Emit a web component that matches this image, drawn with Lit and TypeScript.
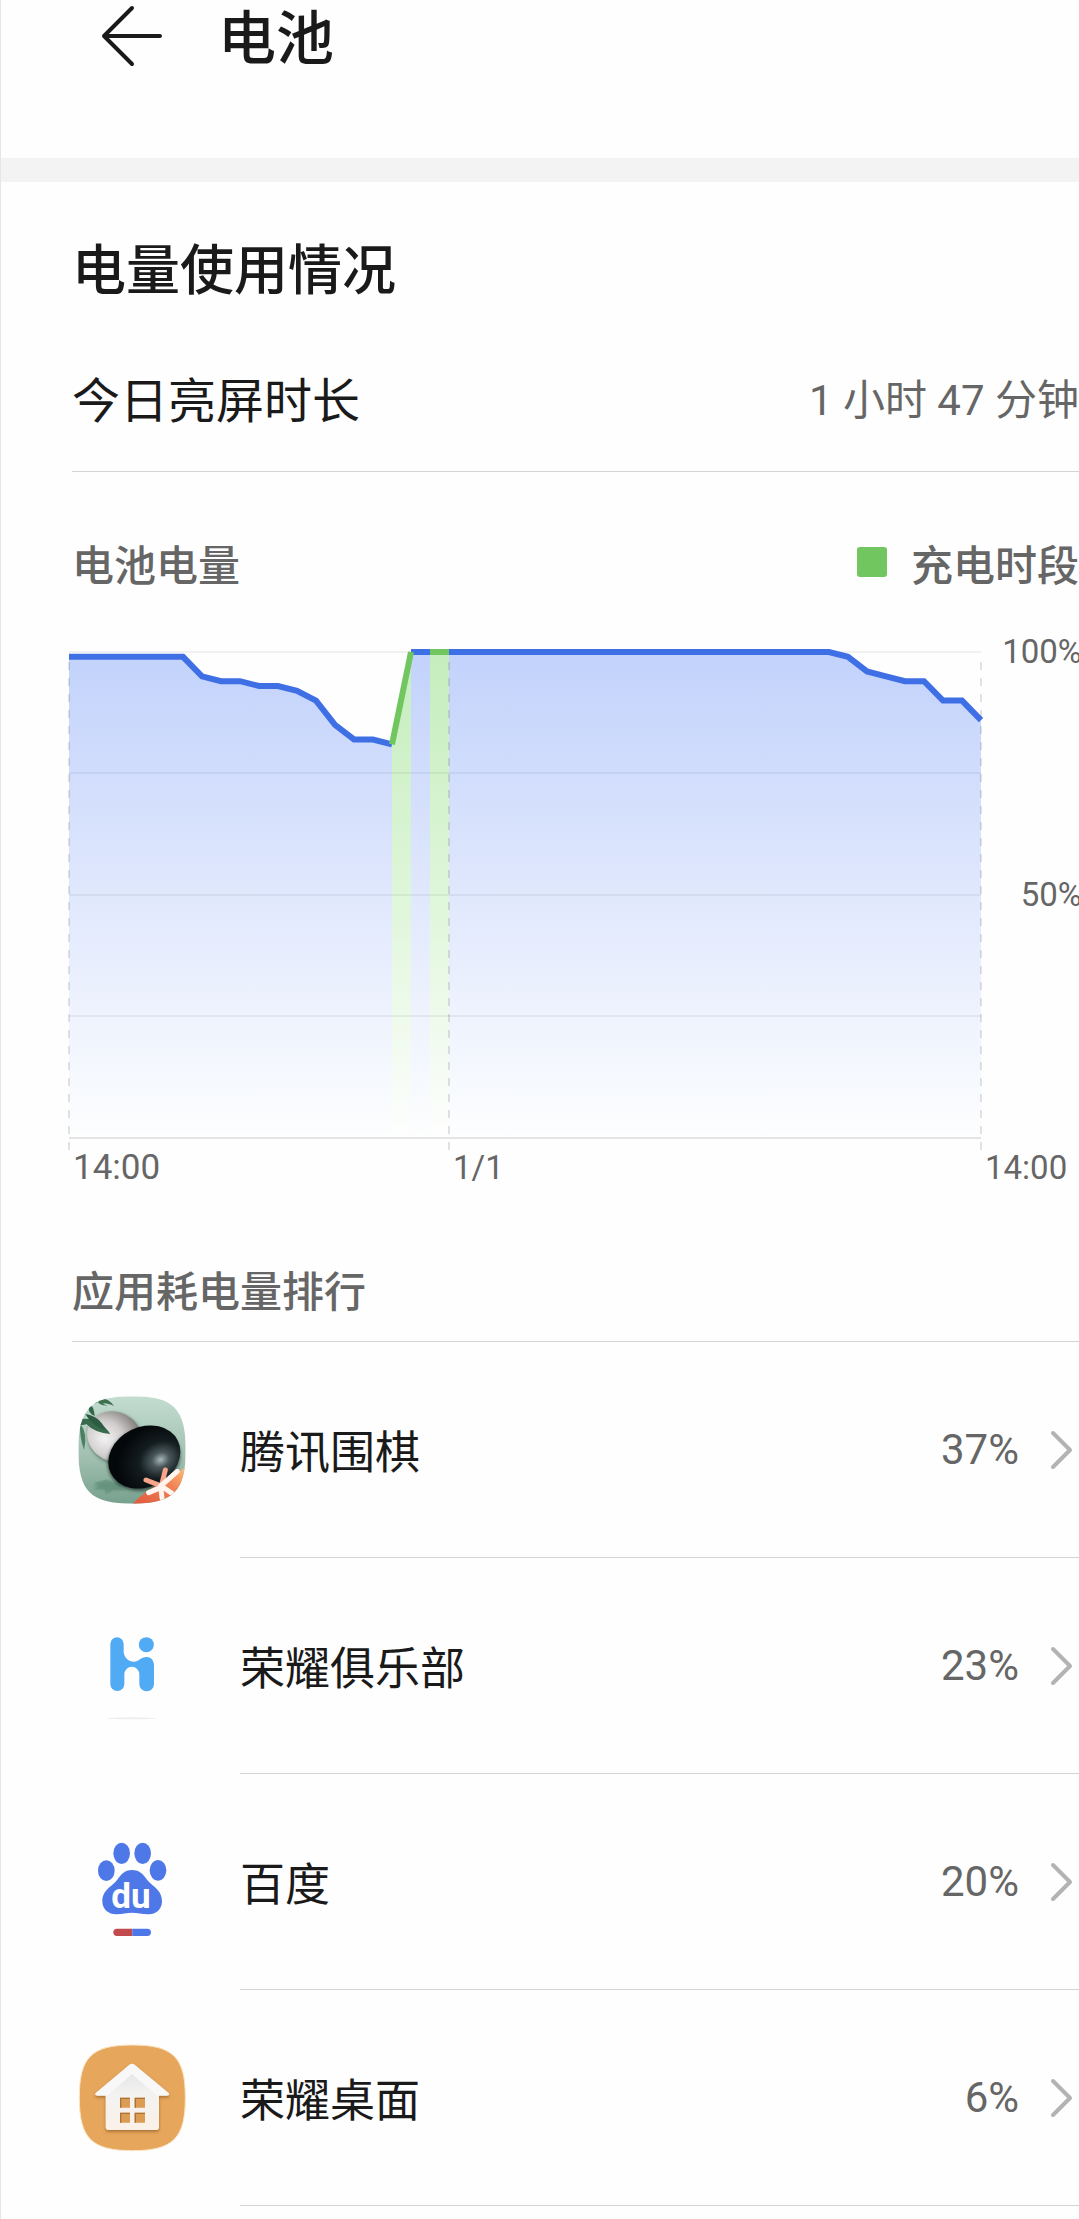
import { LitElement, css, html, svg } from 'lit';
import { customElement, property } from 'lit/decorators.js';

interface AppUsage {
  name: string;
  percent: number;
  icon: unknown;
}

// One sample every half hour, from 14:00 to 14:00
const LEVELS = [
  99, 99, 99, 99, 99, 99, 99, 95, 94, 94, 93, 93, 92, 90, 85, 82, 82, 81,
  100, 100, 100, 100, 100, 100, 100, 100, 100, 100, 100, 100, 100, 100, 100,
  100, 100, 100, 100, 100, 100, 100, 100, 99, 96, 95, 94, 94, 90, 90, 86,
];

// Indexes of the samples at which a charging half hour starts
const CHARGING = [17, 19];

const STEP = 19;
const HEIGHT = 486;

const goIcon = html`
  <svg class="icon" viewBox="54 48 324 324" aria-hidden="true">
    <defs>
      <linearGradient id="go-bg" x1="0" y1="0" x2="0" y2="1">
        <stop offset="0" stop-color="#c3ddd1" />
        <stop offset="0.55" stop-color="#a3c1b2" />
        <stop offset="1" stop-color="#76a08d" />
      </linearGradient>
      <radialGradient id="go-white" cx="0.36" cy="0.62" r="0.7">
        <stop offset="0" stop-color="#f4f3f3" />
        <stop offset="0.5" stop-color="#cfcccc" />
        <stop offset="1" stop-color="#7f7a7a" />
      </radialGradient>
      <radialGradient id="go-black" cx="0.68" cy="0.66" r="0.6">
        <stop offset="0" stop-color="#a9b8bb" />
        <stop offset="0.2" stop-color="#4a575a" />
        <stop offset="0.5" stop-color="#131c1f" />
        <stop offset="1" stop-color="#05080a" />
      </radialGradient>
      <linearGradient id="go-corner" x1="0" y1="1" x2="1" y2="0">
        <stop offset="0" stop-color="#e2573a" />
        <stop offset="0.6" stop-color="#f08155" />
        <stop offset="1" stop-color="#fbc27a" />
      </linearGradient>
      <filter id="go-soft" x="-20%" y="-20%" width="140%" height="140%">
        <feGaussianBlur stdDeviation="5" />
      </filter>
      <clipPath id="go-clip">
        <path d="M216 49C340 49 377 86 377 210S340 371 216 371 55 334 55 210 92 49 216 49Z" />
      </clipPath>
    </defs>
    <g clip-path="url(#go-clip)">
      <rect x="54" y="48" width="324" height="324" fill="url(#go-bg)" />
      <ellipse cx="152" cy="318" rx="50" ry="14" fill="#5d8d76" opacity="0.6" filter="url(#go-soft)" />
      <path d="M102 308l40-10 20 12 30-6-14 18 22 12-40-4-22 14-6-18-30 4 18-12z" fill="#5c8a74" opacity="0.4" />
      <ellipse cx="166" cy="175" rx="86" ry="76" transform="rotate(28 166 175)" fill="#4e6c5f" opacity="0.7" filter="url(#go-soft)" />
      <ellipse cx="163" cy="170" rx="84" ry="74" transform="rotate(28 163 170)" fill="url(#go-white)" />
      <ellipse cx="252" cy="238" rx="112" ry="92" transform="rotate(-22 252 238)" fill="#20312e" opacity="0.7" filter="url(#go-soft)" />
      <ellipse cx="253" cy="231" rx="112" ry="90" transform="rotate(-26 253 231)" fill="url(#go-black)" />
      <path d="M90 70q42-32 72 8-22-10-34-8 10 8 18 6-26 2-32-10-10 8-24 4z" fill="#3e7050" />
      <path d="M86 82q14-14 18 26-20-8-18-26z" fill="#34664a" />
      <path d="M55 118q60-12 96 44-48-4-72-30-6 4-24 2z" fill="#386b4d" />
      <path d="M76 102q46 8 60 48-40-12-60-48z" fill="#2d5b41" />
      <path d="M60 130q24 30 12 80-14-40-12-80z" fill="#4c7f61" />
      <path d="M218 372q26-30 84-62 40-22 76-50v112z" fill="url(#go-corner)" />
      <g fill="none" stroke-linecap="round">
        <path d="M304 318l12-48M304 318l-46-18" stroke="#f7a58a" stroke-width="15" />
        <path d="M302 318l50-44M304 322l-38 16M304 318l32 22M302 318l4 36" stroke="#fff4ee" stroke-width="15" />
      </g>
    </g>
  </svg>
`;

const clubIcon = html`
  <svg class="icon" viewBox="54 36 324 324" aria-hidden="true">
    <path
      d="M151 132a20 20 0 0 1 40 0V156C193 174 206 185 222 185C236 185 243 171 259 171C273 171 282 181 282 196V252a22 22 0 0 1-44 0V224a22 23 0 0 0-45 0V252a21 21 0 0 1-42 0Z"
      fill="#50aaf4"
    />
    <circle cx="259" cy="134" r="22.500" fill="#50aaf4" />
    <ellipse cx="215" cy="355" rx="74" ry="3" fill="#eeeeee" />
  </svg>
`;

const baiduIcon = html`
  <svg class="icon" viewBox="54 24 324 324" aria-hidden="true">
    <g fill="#4e78e8">
      <ellipse cx="139" cy="152" rx="25" ry="31" />
      <ellipse cx="185" cy="100" rx="25" ry="32" />
      <ellipse cx="248" cy="100" rx="25" ry="32" />
      <ellipse cx="294" cy="151" rx="25" ry="31" />
      <path
        d="M216 150C240 150 250 164 260 178C276 200 306 208 306 244C306 270 286 284 264 283C246 282 232 278 216 278S188 282 170 283C148 284 127 270 127 244C127 208 158 200 173 178C183 164 193 150 216 150Z"
      />
    </g>
    <text class="logo-text" x="213" y="263" text-anchor="middle">du</text>
    <path d="M217 326h-46a11 11 0 0 0 0 22h46z" fill="#c24a4d" />
    <path d="M217 326h45a11 11 0 0 1 0 22h-45z" fill="#4e78e8" />
  </svg>
`;

const homeIcon = html`
  <svg class="icon" viewBox="54 42 324 324" aria-hidden="true">
    <defs>
      <linearGradient id="home-wall" x1="0" y1="0" x2="0" y2="1">
        <stop offset="0" stop-color="#e4e4e4" />
        <stop offset="0.4" stop-color="#f3f2f1" />
        <stop offset="1" stop-color="#fbf1e8" />
      </linearGradient>
      <filter id="home-shadow" x="-20%" y="-20%" width="140%" height="150%">
        <feDropShadow dx="0" dy="5" stdDeviation="4" flood-color="#7a4a14" flood-opacity="0.6" />
      </filter>
    </defs>
    <path d="M217 45C340 45 376 82 376 203S340 362 217 362 58 324 58 203 94 45 217 45Z" fill="#e6a65c" stroke="#fbe6c4" stroke-width="3" />
    <g filter="url(#home-shadow)">
      <path d="M216 118L297 184V290q0 10-10 10H147q-10 0-10-10V184Z" fill="url(#home-wall)" />
      <path d="M208 104q8-6 16 0L326 189q5 7-5 8H292L216 132 141 197H112q-10-1-5-8Z" fill="#f8f8f8" />
    </g>
    <path d="M180 203h30v30h-30zM224 203h31v30h-31zM180 248h30v30h-30zM224 248h31v30h-31z" fill="#dd9c54" />
    <path d="M182 233v-28h28M226 233v-28h29M182 278v-28h28M226 278v-28h29" fill="none" stroke="#a8733a" stroke-width="4" />
  </svg>
`;

const APPS: AppUsage[] = [
  { name: '腾讯围棋', percent: 37, icon: goIcon },
  { name: '荣耀俱乐部', percent: 23, icon: clubIcon },
  { name: '百度', percent: 20, icon: baiduIcon },
  { name: '荣耀桌面', percent: 6, icon: homeIcon },
];

@customElement('battery-chart')
export class BatteryChart extends LitElement {
  static styles = css`
    :host {
      display: block;
      color: #666666;
      font-size: 33px;
      line-height: 36px;
    }

    .plot {
      display: grid;
      grid-template-columns: 1fr 98px;
    }

    .graph {
      display: block;
      width: 100%;
      padding-top: 12px;
    }

    .levels {
      display: grid;
      grid-template-rows: 47% 53%;
      margin-right: -3px;
      text-align: right;
    }

    .times {
      display: grid;
      grid-template-columns: 20fr 28fr 98px;
    }

    .times span {
      padding-left: 4px;
    }

    .times .start {
      font-size: 35px;
    }
  `;

  @property({ type: Array }) levels: number[] = [];

  @property({ type: Array }) charging: number[] = [];

  __point(i: number) {
    return `${i * STEP},${((100 - this.levels[i]) * HEIGHT) / 100}`;
  }

  __points(from: number, to: number) {
    const points = [];
    for (let i = from; i <= to; i += 1) points.push(this.__point(i));
    return points.join(' ');
  }

  __area(from: number, to: number, fill: string) {
    return svg`<polygon
      points="${from * STEP},${HEIGHT} ${this.__points(from, to)} ${to * STEP},${HEIGHT}"
      fill=${fill}
      shape-rendering="crispEdges"
    />`;
  }

  __line(from: number, to: number, stroke: string) {
    return svg`<polyline points=${this.__points(from, to)} fill="none" stroke=${stroke} stroke-width="6" />`;
  }

  // Splits the series into alternating idle and charging runs
  __runs() {
    const runs = [];
    let from = 0;
    for (const start of this.charging) {
      runs.push({ from, to: start, charging: false });
      runs.push({ from: start, to: start + 1, charging: true });
      from = start + 1;
    }
    runs.push({ from, to: this.levels.length - 1, charging: false });
    return runs;
  }

  render() {
    const runs = this.__runs();
    return html`
      <div class="plot">
        <svg class="graph" viewBox="0 -6 912 504" overflow="visible" role="img" aria-label="电池电量">
          <defs>
            <linearGradient id="idle" gradientUnits="userSpaceOnUse" x1="0" y1="0" x2="0" y2="486">
              <stop offset="0" stop-color="#c2d2fb" />
              <stop offset="0.5" stop-color="#e0e8fd" />
              <stop offset="1" stop-color="#fdfefe" />
            </linearGradient>
            <linearGradient id="charge" gradientUnits="userSpaceOnUse" x1="0" y1="0" x2="0" y2="486">
              <stop offset="0" stop-color="#c5edbd" />
              <stop offset="0.5" stop-color="#def6d9" />
              <stop offset="1" stop-color="#fefefe" />
            </linearGradient>
          </defs>
          ${runs.map((r) => this.__area(r.from, r.to, r.charging ? 'url(#charge)' : 'url(#idle)'))}
          <g stroke="#000000" stroke-opacity="0.05" stroke-width="2">
            <path d="M0 0H912M0 121H912M0 243H912M0 364H912" />
            <path d="M0 486H912" stroke-opacity="0.1" />
          </g>
          <g stroke="#000000" stroke-opacity="0.11" stroke-width="2" stroke-dasharray="8 8">
            <path d="M0 10V498M380 10V498M912 10V498" />
          </g>
          ${runs.filter((r) => !r.charging).map((r) => this.__line(r.from, r.to, '#3f6fe5'))}
          ${runs.filter((r) => r.charging).map((r) => this.__line(r.from, r.to, '#72c65f'))}
        </svg>
        <div class="levels">
          <span>100%</span>
          <span>50%</span>
        </div>
      </div>
      <div class="times">
        <span class="start">14:00</span>
        <span>1/1</span>
        <span>14:00</span>
      </div>
    `;
  }
}

@customElement('app-root')
export class AppRoot extends LitElement {
  static styles = css`
    :host {
      display: block;
      box-sizing: border-box;
      min-height: 100vh;
      overflow: hidden;
      border-left: 1px solid #e6e6e6;
      background-color: #fefefe;
      color: #1a1a1a;
      font-family: Roboto, 'Noto Sans CJK SC', sans-serif;
    }

    h1,
    h2,
    h3,
    ul {
      margin: 0;
      padding: 0;
      font-weight: 500;
    }

    button {
      border: 0;
      padding: 0;
      background: none;
      color: inherit;
      font: inherit;
      text-align: left;
      cursor: pointer;
    }

    .header {
      display: flex;
      align-items: flex-start;
      gap: 53px;
      height: 155px;
      padding: 3px 0 0 98px;
    }

    .back,
    .back svg {
      display: block;
      width: 66px;
      height: 66px;
    }

    .title {
      font-size: 58px;
      line-height: 72px;
    }

    .band {
      height: 24px;
      background-color: #f3f3f3;
    }

    .section {
      padding-left: 71px;
    }

    .heading {
      padding: 54px 0 16px;
      font-size: 54px;
      line-height: 72px;
    }

    .row {
      display: flex;
      align-items: center;
      justify-content: space-between;
      box-sizing: border-box;
    }

    .screen-time {
      height: 148px;
      padding-bottom: 2px;
      border-bottom: 1px solid #d4d4d4;
      font-size: 48px;
    }

    .value {
      color: #666666;
      font-size: 42px;
    }

    .caption {
      color: #666666;
      font-size: 42px;
      font-weight: 500;
    }

    .chart-head {
      height: 162px;
      padding-top: 18px;
    }

    .legend {
      display: flex;
      align-items: center;
      gap: 24px;
    }

    .swatch {
      width: 30px;
      height: 30px;
      border-radius: 3px;
      background-color: #72c65f;
    }

    .chart {
      padding-left: 68px;
    }

    .ranking {
      height: 156px;
      padding-top: 50px;
      border-bottom: 1px solid #d4d4d4;
    }

    .apps {
      list-style: none;
      font-weight: 400;
    }

    .app {
      display: grid;
      grid-template-columns: 168px 1fr;
      width: 100%;
      height: 216px;
    }

    .icon {
      align-self: center;
      width: 108px;
      height: 108px;
      margin-left: 6px;
    }

    .logo-text {
      fill: #ffffff;
      font-family: Roboto, sans-serif;
      font-size: 105px;
      font-weight: 700;
    }

    .details {
      gap: 26px;
      border-bottom: 1px solid #d4d4d4;
    }

    .name {
      flex: 1;
      font-size: 45px;
    }

    .chevron {
      width: 34px;
      height: 48px;
    }
  `;

  @property({ type: Array }) apps = APPS;

  __renderApp(app: AppUsage) {
    return html`
      <li>
        <button class="app">
          ${app.icon}
          <span class="row details">
            <span class="name">${app.name}</span>
            <span class="value">${app.percent}%</span>
            <svg class="chevron" viewBox="0 0 34 48" aria-hidden="true">
              <path d="M8 7l17 17-17 17" fill="none" stroke="#b3b3b3" stroke-width="4" stroke-linecap="round" stroke-linejoin="round" />
            </svg>
          </span>
        </button>
      </li>
    `;
  }

  render() {
    return html`
      <header class="header">
        <button class="back" aria-label="返回">
          <svg viewBox="0 0 66 66" aria-hidden="true">
            <path d="M61 33H6M33 5L5 33l28 28" fill="none" stroke="#1a1a1a" stroke-width="4" stroke-linecap="round" stroke-linejoin="round" />
          </svg>
        </button>
        <h1 class="title">电池</h1>
      </header>
      <div class="band"></div>
      <main>
        <div class="section">
          <h2 class="heading">电量使用情况</h2>
          <div class="row screen-time">
            <span>今日亮屏时长</span>
            <span class="value">1 小时 47 分钟</span>
          </div>
          <div class="row chart-head">
            <h3 class="caption">电池电量</h3>
            <div class="legend caption">
              <span class="swatch"></span>
              <span>充电时段</span>
            </div>
          </div>
        </div>
        <battery-chart class="chart" .levels=${LEVELS} .charging=${CHARGING}></battery-chart>
        <div class="section">
          <h3 class="row caption ranking">应用耗电量排行</h3>
          <ul class="apps">
            ${this.apps.map((app) => this.__renderApp(app))}
          </ul>
        </div>
      </main>
    `;
  }
}
